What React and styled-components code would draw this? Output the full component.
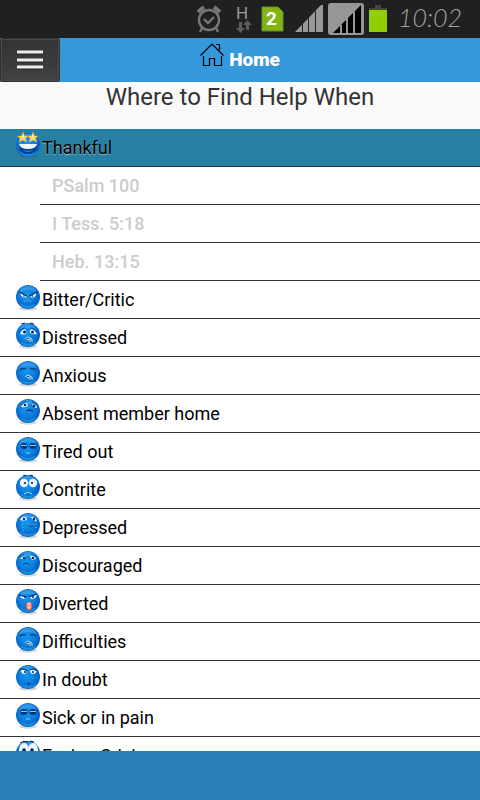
import React, { useId } from "react";
import styled, { createGlobalStyle } from "styled-components";

const GlobalStyle = createGlobalStyle`
  * { box-sizing: border-box; }
  body { margin: 0; background: #fff; font-family: Roboto, "Open Sans", sans-serif; }
`;

const Page = styled.div`
  display: flex;
  flex-direction: column;
  height: 100vh;
  overflow: hidden;
`;

const StatusBar = styled.div`
  display: flex;
  flex: none;
  align-items: center;
  justify-content: flex-end;
  gap: 4px;
  height: 38px;
  padding-right: 20px;
  background: #202020;
`;

const StatusIcon = styled.svg`
  display: block;
  flex: none;
`;

const SimText = styled.text`
  font: bold 19px Roboto, sans-serif;
  fill: #fff;
`;

const NetworkText = styled.text`
  font: 17px Roboto, sans-serif;
  fill: #999;
`;

const Clock = styled.time`
  width: 62px;
  margin-left: 6px;
  color: #a3a3a3;
  font: italic 300 25px/34px Lato, sans-serif;
  padding-bottom: 4px;
  white-space: nowrap;
`;

const NavBar = styled.header`
  display: grid;
  grid-template-columns: 60px 1fr 60px;
  flex: none;
  height: 44px;
  background: #3498db;
`;

const MenuButton = styled.button`
  display: flex;
  align-items: center;
  justify-content: center;
  padding: 0;
  border: 1px solid #303030;
  border-radius: 2px;
  background: linear-gradient(#333, #424242);
  box-shadow: inset 0 0 0 1px #4b4b4b;
`;

const HomeLink = styled.a`
  display: flex;
  align-items: center;
  justify-content: center;
  gap: 5px;
  color: #fff;
  font-size: 19px;
  font-weight: 900;
  line-height: 44px;
  text-decoration: none;

  svg { margin-bottom: 10px; }
`;

const Title = styled.h1`
  flex: none;
  height: 47px;
  margin: 0;
  background: #f9f9f9;
  color: #333;
  font-size: 24px;
  font-weight: 400;
  line-height: 30px;
  text-align: center;
`;

const List = styled.ul`
  flex: 1;
  min-height: 0;
  margin: 0;
  padding: 0;
  overflow: hidden;
  list-style: none;
`;

const MoodButton = styled.button`
  display: flex;
  align-items: center;
  gap: 1px;
  width: 100%;
  height: 38px;
  padding: 0 15px;
  border: 0;
  border-bottom: 1px solid #333;
  background: ${(p) => (p.$open ? "#2680a3" : "#fff")};
  color: #000;
  font: 18px Roboto, sans-serif;
  text-shadow: ${(p) => (p.$open ? "0 1px 1px #9bbcca" : "none")};

  svg { flex: none; margin-bottom: 6px; }
`;

const Verses = styled.ul`
  margin: 0 0 0 40px;
  padding: 0;
  list-style: none;
`;

const VerseLink = styled.a`
  display: block;
  height: 38px;
  padding-left: 12px;
  border-bottom: 1px solid #333;
  color: #ccc;
  font-size: 18px;
  font-weight: 500;
  line-height: 37px;
  text-decoration: none;
`;

const Footer = styled.footer`
  flex: none;
  height: 49px;
  background: #2980b9;
`;

const W = "#eef7ff";
const D = "#06264f";

const SadEyes = () => (
  <>
    <path d="M4 11Q5 7 9 6Q11 9 10 11Q7 12 4 11ZM14 10Q13 7 16 6Q20 8 21 11Q17 12 14 10Z" fill={W} />
    <circle cx="8.5" cy="9" r="1.5" fill={D} />
    <circle cx="16.5" cy="9" r="1.5" fill={D} />
    <path d="M3 9Q5 5 9 5M15 5Q19 5 21 9" stroke="#07519b" fill="none" />
  </>
);

const ClosedEyes = () => (
  <path d="M4 9Q7 7 10 8M14 8Q18 7 20 9" stroke="#06366f" strokeWidth="1.2" fill="none" />
);

const ChatteringMouth = () => (
  <>
    <path d="M9 16L12 14L16 15L17 18L15 20L13 17Z" fill="#0b559c" />
    <path d="M9 16L12 14L16 16L16 19M11 17L14 16L14 19" stroke="#c8eaff" strokeWidth="1" fill="none" />
  </>
);

const LiddedEyes = () => (
  <>
    <ellipse cx="8" cy="9" rx="3.7" ry="3" fill="#073b80" />
    <ellipse cx="17" cy="9" rx="3.7" ry="3" fill="#073b80" />
    <path d="M5 8.5H11M14 8.5H20" stroke="#8bcdf0" />
    <path d="M7 9.5H9M16 9.5H18" stroke={D} strokeWidth="1.2" />
    <path d="M10 16H14" stroke="#83ccfa" />
  </>
);

const faces = {
  starry: (
    <>
      <path d="M3 12H21Q21 21 12 21Q3 21 3 12Z" fill="#073f8f" />
      <path d="M3 11H21Q20 16 12 16Q4 16 3 11Z" fill={W} />
      <path d="M6 17Q12 21 18 17Q12 18 6 17Z" fill="#1e83da" />
      <path d="M7 -1L8.5 3L12 3L9.4 5.5L11 9L7 7.3L3 9L4 5.5L1.5 3L5.5 3ZM17 -1L18.5 3L22 3L19.5 5.5L21 9L17 7.3L13 9L14.2 5.5L11.8 3L15.5 3Z" fill="#ffd66e" stroke="#ed9b2e" strokeWidth=".5" />
      <path d="M7 2V5M17 2V5" stroke="#fff7bd" strokeWidth="1.5" />
    </>
  ),
  angry: (
    <>
      <path d="M4 8L11 12Q6 14 4 8ZM14 12L20 8Q20 14 14 12Z" fill={W} />
      <path d="M3 7L11 11M13 11L21 7" stroke={D} strokeWidth="1" />
      <circle cx="8" cy="11" r=".8" fill={D} /><circle cx="16.5" cy="11" r=".8" fill={D} />
      <path d="M8 17Q12 13 15 17" stroke="#4a9ad9" strokeWidth="1.2" fill="none" />
    </>
  ),
  distressed: (
    <>
      <SadEyes /><ChatteringMouth />
      <path d="M5 1L9 0M14 0L18 1" stroke={D} />
    </>
  ),
  anxious: <><ClosedEyes /><ChatteringMouth /></>,
  absent: (
    <>
      <path d="M5 8Q7 4 11 4L12 7Q8 9 5 8ZM16 5L20 6L21 9Q17 9 16 5Z" fill={W} />
      <circle cx="9" cy="6" r="1.3" fill={D} /><circle cx="18" cy="7" r="1.3" fill={D} />
      <path d="M4 6L10 2M16 3L21 6" stroke="#07519b" />
      <path d="M10 12Q13 9 17 12Q13 11 10 12Z" fill={D} stroke="#083d78" />
    </>
  ),
  tired: <LiddedEyes />,
  contrite: (
    <>
      <circle cx="8" cy="8" r="4.2" fill={W} /><circle cx="17" cy="8" r="4.2" fill={W} />
      <circle cx="9" cy="8" r="1.1" fill={D} /><circle cx="16" cy="8" r="1.1" fill={D} />
      <path d="M8 19Q12 16 16 19" stroke="#9bd4f7" strokeWidth="1.2" fill="none" />
      <path d="M7 1L10 0M14 0L17 1" stroke={D} />
    </>
  ),
  depressed: (
    <>
      <path d="M4 7Q6 3 10 4L11 7Q7 8 4 7ZM15 4Q20 4 21 8Q17 8 15 4Z" fill={W} />
      <circle cx="8" cy="6" r="1.2" fill={D} /><circle cx="18" cy="6" r="1.2" fill={D} />
      <path d="M7 8V20M20 8V16" stroke="#80caf1" strokeWidth="1" strokeDasharray="1 2" />
      <path d="M12 13Q15 10 18 12L17 14Z" fill="#07376d" /><path d="M13 12H18" stroke="#5faee0" />
    </>
  ),
  discouraged: (
    <>
      <path d="M4 8Q6 5 9 5L9 8ZM14 5Q19 4 20 8L16 9Z" fill={W} />
      <circle cx="8" cy="7" r="1.3" fill={D} /><circle cx="17" cy="7" r="1.3" fill={D} />
      <path d="M3 6L8 3M15 3L20 6" stroke="#07519b" />
      <path d="M7 14Q10 10 13 14" stroke={D} fill="none" />
    </>
  ),
  diverted: (
    <>
      <path d="M4 7L11 8Q9 11 5 9ZM14 8L21 6Q20 10 15 10Z" fill={W} />
      <path d="M3 6L11 8M13 8L20 5" stroke={D} />
      <circle cx="9" cy="8" r="1" fill={D} /><circle cx="17" cy="8" r="1" fill={D} />
      <ellipse cx="13" cy="17" rx="3.2" ry="4.3" fill="#ee8170" stroke="#7d3d67" strokeWidth=".6" />
      <path d="M11 15H15M11 18H15M13 13V20" stroke="#ffe1d5" strokeWidth=".8" />
    </>
  ),
  doubt: (
    <>
      <path d="M5 5H11Q11 9 8 9Q5 9 5 5ZM14 5H21Q20 9 17 9Q14 9 14 5Z" fill={W} />
      <path d="M4 5Q8 3 11 6M14 5Q18 3 21 6" stroke="#07417d" strokeWidth="1.3" fill="none" />
      <circle cx="9" cy="7" r="1" fill={D} /><circle cx="17" cy="7" r="1" fill={D} /><circle cx="12.5" cy="18.5" r="1" fill={D} />
    </>
  ),
  facing: (
    <>
      <ellipse cx="8" cy="9" rx="5" ry="7" fill={W} /><ellipse cx="17" cy="9" rx="5" ry="7" fill={W} />
      <circle cx="8" cy="9" r="1.8" fill={D} /><circle cx="16" cy="9" r="1.8" fill={D} />
      <path d="M4 2Q8 -1 12 1M14 0L18 1" stroke={D} fill="none" />
    </>
  ),
};

function Face({ kind }) {
  const id = useId();
  return (
    <svg width="26" height="28" viewBox="-1 -2 26 28" aria-hidden="true">
      <defs>
        <radialGradient id={id} cx="45%" cy="42%" r="62%">
          <stop offset="0" stopColor="#1397f2" />
          <stop offset=".5" stopColor="#0b80df" />
          <stop offset=".85" stopColor="#075dc3" />
          <stop offset="1" stopColor="#1681dc" />
        </radialGradient>
      </defs>
      <ellipse cx="12" cy="23.5" rx="9" ry="2" fill="#555" opacity=".25" />
      <circle cx="12" cy="12" r="12" fill={`url(#${id})`} />
      <path d="M3 7Q6 0 12 1Q19 1 21 7Q12 3 3 7Z" fill="#8bd5ff" opacity=".3" />
      <path d="M3 18Q12 24 21 18Q18 23 12 23Q6 23 3 18Z" fill="#25c9ff" opacity=".45" />
      {faces[kind]}
    </svg>
  );
}

const moods = [
  ["Thankful", "starry", ["PSalm 100", "I Tess. 5:18", "Heb. 13:15"]],
  ["Bitter/Critic", "angry"],
  ["Distressed", "distressed"],
  ["Anxious", "anxious"],
  ["Absent member home", "absent"],
  ["Tired out", "tired"],
  ["Contrite", "contrite"],
  ["Depressed", "depressed"],
  ["Discouraged", "discouraged"],
  ["Diverted", "diverted"],
  ["Difficulties", "anxious"],
  ["In doubt", "doubt"],
  ["Sick or in pain", "tired"],
  ["Facing Crisis", "facing"],
];

function StatusIcons() {
  return (
    <>
      <StatusIcon width="26" height="28" viewBox="0 0 26 28" fill="none" stroke="#777" strokeWidth="2.4">
        <circle cx="13" cy="15" r="10" />
        <path d="M8 14L12 18L18 12M6 23L4 27M20 23L22 27" />
        <path d="M2 7L8 2M18 2L24 7" strokeWidth="4" />
      </StatusIcon>
      <StatusIcon width="31" height="38" viewBox="-3 0 31 38">
        <NetworkText x="7" y="19">H</NetworkText>
        <path d="M10 22H13V28H16L11.5 33L7 28H10ZM17 30V25H14L18.5 20L23 25H20V30Z" fill="#5c5c5c" />
      </StatusIcon>
      <StatusIcon width="24" height="26" viewBox="0 0 24 26">
        <path d="M1 1H17L22 6V25H1Z" fill="#82b414" stroke="#688b2d" />
        <SimText x="5" y="19">2</SimText>
      </StatusIcon>
      <StatusIcon width="35" height="38" viewBox="2 0 35 38">
        <path d="M8 32L34 5H36V32Z" fill="#999" />
        <path d="M15.5 24V32M21.5 18V32M28.5 11V32" stroke="#202020" />
      </StatusIcon>
      <StatusIcon width="36" height="38" viewBox="0 0 36 38">
        <rect y="3" width="36" height="32" rx="3" fill="#969696" />
        <path d="M5 33L33 5V33Z" fill="#000" />
        <path d="M13 25V33M19 18V33M26 11V33" stroke="#969696" strokeWidth="2" />
      </StatusIcon>
      <StatusIcon width="20" height="38" viewBox="0 0 20 38">
        <path d="M7 5H13V8H19V10H1V8H7Z" fill="#444" />
        <path d="M1 10H19V32H1Z" fill="#91d000" />
      </StatusIcon>
    </>
  );
}

export default function App() {
  return (
    <Page>
      <GlobalStyle />
      <StatusBar>
        <StatusIcons />
        <Clock>10:02</Clock>
      </StatusBar>
      <NavBar>
        <MenuButton aria-label="Menu">
          <svg width="28" height="20" viewBox="0 0 28 20">
            <path d="M1 3H27M1 11H27M1 18H27" stroke="#222" strokeWidth="3" />
            <path d="M1 2H27M1 10H27M1 17H27" stroke="#eee" strokeWidth="3" />
          </svg>
        </MenuButton>
        <HomeLink href="#home">
          <svg width="24" height="24" viewBox="0 0 24 24" fill="none" stroke="#000" strokeWidth="1.2">
            <path d="M.5 12.5L12 1L23.5 12.5M3.5 13V22.5H9.5V15.5H14.5V22.5H21.5V13M16 1.5H19.5V7" />
          </svg>
          Home
        </HomeLink>
      </NavBar>
      <Title>Where to Find Help When</Title>
      <List>
        {moods.map(([name, face, verses]) => (
          <li key={name}>
            <MoodButton $open={Boolean(verses)} aria-expanded={Boolean(verses)}>
              <Face kind={face} />
              {name}
            </MoodButton>
            {verses && (
              <Verses>
                {verses.map((verse) => (
                  <li key={verse}><VerseLink href="#verse">{verse}</VerseLink></li>
                ))}
              </Verses>
            )}
          </li>
        ))}
      </List>
      <Footer />
    </Page>
  );
}
